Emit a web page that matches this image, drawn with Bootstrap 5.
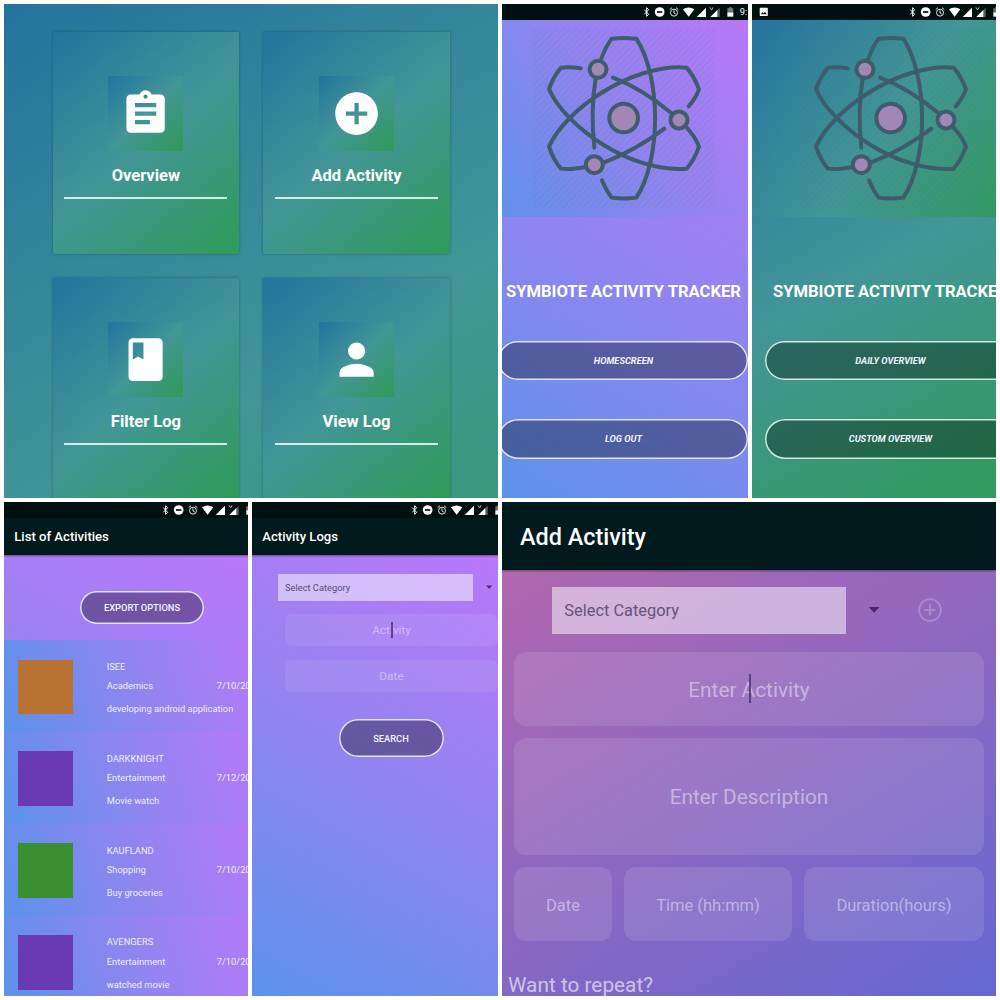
<!DOCTYPE html>
<html lang="en">
<head>
<meta charset="utf-8">
<meta name="viewport" content="width=device-width, initial-scale=1">
<title>Symbiote Activity Tracker</title>
<link href="https://cdn.jsdelivr.net/npm/bootstrap@5.3.0/dist/css/bootstrap.min.css" rel="stylesheet">
<style>
body{width:1000px;height:1000px;overflow:hidden;background:#fff;font-family:Roboto,"Liberation Sans",sans-serif;color:#fff;line-height:1}
.board{width:1000px;height:1000px;padding:4px;gap:4px}
.board-row{height:494px;gap:4px}
.screen{height:494px;overflow:hidden;flex:none}
.w-a{width:494px}.w-b{width:246px}.w-c{width:244px}
.phone{width:276px;flex:none}
.shift{margin-left:-17px}
.statusbar{height:16px;background:#000f0f;flex:none}
.statusbar svg{display:block;flex:none}
.st-shot{margin-left:6.8px;margin-right:139.7px}
.st-156{margin-left:156.7px}
.clock{font-size:9.3px;margin-left:-12px}
.dark-top{background:#001a1e;flex:none;font-weight:500;box-shadow:0 1px 2px rgba(0,0,0,.4);position:relative}
.dark-top.sm-top{height:37px;font-size:13.1px;padding-left:10.3px}
.dark-top.lg-top{height:67.5px;font-size:23.4px;padding:4px 0 0 18px}
/* home */
.home{background:linear-gradient(149.5deg,#24739e,#429697 50%,#2f9a57) 0 0/494px 790px no-repeat;padding:28.4px 0 0 48.6px}
.tiles{display:grid;grid-template-columns:186.6px 186.6px;grid-auto-rows:222px;gap:24px}
.tile{background:linear-gradient(139.9deg,#24739e,#429697 50%,#2f9a57);box-shadow:0 0 3px rgba(0,0,0,.3);padding:44px 11.6px 0;border-radius:1px}
.tile-ico{width:75px;height:75px;background:linear-gradient(135deg,#24739e,#429697 50%,#2f9a57)}
.tile-ico svg{width:51.2px;height:51.2px;fill:#fff}
.tile h2{font-size:16.5px;font-weight:700;margin:16px 0 12px;line-height:18px}
.rule{height:2px;background:#d3ecea;width:163px}
/* splash */
.purple{background:linear-gradient(209.4deg,#bb77fa,#9284f0 50%,#5b92ea)}
.green{background:linear-gradient(150.6deg,#24739e,#429697 50%,#2f9a57)}
.body-h{height:478px}
.hero{height:196.7px;padding:8px 0 0 1.4px}
.hero-p{background:linear-gradient(234.5deg,#bb77fa,#9284f0 50%,#5b92ea)}
.hero-g{background:linear-gradient(125.5deg,#24739e,#429697 50%,#2f9a57)}
.brand{font-size:16.6px;font-weight:700;margin:66px 0 41px;line-height:17px;white-space:nowrap;padding-left:1px}
.pill{box-shadow:inset 0 0 0 1.5px #e3e2fa;border-radius:30px;background:rgba(0,0,0,.33);color:#f3f2ff;font-weight:500;font-size:9.3px;display:flex;align-items:center;justify-content:center}
.pill-l{width:250px;height:39.4px;margin-bottom:39.4px;font-style:italic;font-weight:700;padding-left:1px}
.green .pill{box-shadow:inset 0 0 0 1.5px #cfe9df}
.pill-export{width:123.5px;height:33px;margin:36px auto 16px}
.pill-search{width:105px;height:38.4px;margin:26.7px auto 0}
/* list */
.entry{height:91.9px;background:linear-gradient(251.6deg,#bb77fa,#9284f0 50%,#5b92ea);font-size:9.3px;padding:19.6px 0 0 14.2px;color:#f0edff}
.swatch{width:54.6px;height:54.6px;flex:none;margin-right:34px}
.sw-o{background:#b87333}.sw-v{background:#6a3ab2}.sw-g{background:#3a8f30}
.e-text{line-height:12px;padding-top:1.2px}
.e-cat{margin:7.1px 0 11.2px}
.e-cat span:first-child{width:110px}
/* forms */
.log-form{padding-top:19px}
.pick{background:rgba(255,255,255,.5);color:#5c4a75}
.pick-s{width:195px;height:26.6px;margin-left:26px;font-size:9.3px;padding-left:7px}
.pick-l{width:294px;height:46.5px;margin-left:50.3px;font-size:16.4px;padding:2px 0 0 12px;color:#67527a}
.field{background:rgba(255,255,255,.11);color:rgba(255,255,255,.46);display:flex;align-items:center;justify-content:center;position:relative}
.field-s{width:213px;height:32.7px;border-radius:7px;margin-left:33px;padding-top:2px;font-size:11.8px;color:rgba(255,255,255,.42);background:rgba(255,255,255,.08)}
.field-l{border-radius:12px;font-size:20.8px;padding-top:3px}
.field-m{border-radius:12px;font-size:16.5px;height:74px;padding-top:4px}
.cursor{position:absolute;background:#523079;opacity:.85}
.add{background:linear-gradient(149deg,#b267b0,#6568d2);height:426.5px;padding-top:17.5px}
.fields{padding:18.3px 12px 0;gap:12px}
.repeat{font-size:20.8px;padding:33.500px 0 0 6px;color:rgba(255,255,255,.62);white-space:nowrap;line-height:22px}
</style>
<script src="https://cdn.jsdelivr.net/npm/bootstrap@5.3.0/dist/js/bootstrap.bundle.min.js"></script>
</head>
<body>
<svg width="0" height="0" class="position-absolute">
  <defs>
    <pattern id="hatch" width="14" height="14" patternUnits="userSpaceOnUse" patternTransform="rotate(45)"><rect width="6" height="14" fill="#3f5c6e" opacity=".075"/></pattern>
    <symbol id="status" viewBox="430 12 330 48">
      <path d="M437 29L450 43L444 49V23L450 29L437 43" fill="none" stroke="#fff" stroke-width="3"/>
      <circle cx="483" cy="36" r="14.5" fill="#fff"/><rect x="475" y="33.500" width="16" height="5" fill="#000f0f"/>
      <circle cx="526" cy="38" r="10.500" fill="none" stroke="#dfe5e5" stroke-width="3"/><path d="M526 31V39L531 42M513 29L520 23M539 29L532 23" fill="none" stroke="#dfe5e5" stroke-width="3"/>
      <path d="M553 28Q570 17 587 28L570 50Z" fill="#fff"/>
      <path d="M594 51H622V23Z" fill="#fff"/>
      <path d="M635 51L663 23V51Z" fill="#fff" opacity=".35"/><path d="M635 51L656 30V51Z" fill="#fff"/><path d="M634 22L639 30M643 22L639 30" stroke="#fff" stroke-width="3" opacity=".7"/>
      <path d="M686 25H691V22H699V25H704V37H686Z" fill="#6d7676"/><path d="M686 37H704V50H686Z" fill="#fff"/>
    </symbol>
    <symbol id="atom" viewBox="104 84 546 544">
      <rect x="104" y="84" width="546" height="544" fill="url(#hatch)"/>
      <g fill="none" stroke="#3f5c6c" stroke-width="12" stroke-linecap="round" stroke-linejoin="round">
        <path d="M309 176Q322 140 340 116Q376 112 414 116C489 230 489 480 414 593Q376 598 340 593Q324 572 311 541"/>
        <path d="M292 235Q276 330 288 443"/>
        <path d="M247 205Q215 200 188 203Q165 230 152 267C200 380 400 520 565 506Q588 480 602 440Q590 410 566 384"/>
        <path d="M344 233Q430 265 520 340"/>
        <path d="M498 386Q410 452 318 487M260 501Q215 510 188 506Q165 480 152 440C200 330 400 190 565 203Q588 230 602 268Q592 295 571 319"/>
        <g fill="#a186b6"><circle cx="299" cy="208" r="25.500"/><circle cx="542" cy="360" r="25.500"/><circle cx="288" cy="494" r="25.500"/><circle cx="376" cy="354" r="43"/></g>
      </g>
    </symbol>
  </defs>
</svg>
<main class="board d-flex flex-column">
  <div class="board-row d-flex">
    <section class="screen w-a home">
      <div class="tiles">
        <div class="tile d-flex flex-column align-items-center">
          <div class="tile-ico d-flex align-items-center justify-content-center"><svg viewBox="0 0 24 24"><path d="M19 3h-4.180C14.400 1.840 13.300 1 12 1c-1.300 0-2.400.84-2.820 2H5c-1.100 0-2 .9-2 2v14c0 1.100.9 2 2 2h14c1.100 0 2-.9 2-2V5c0-1.100-.9-2-2-2zm-7 0c.55 0 1 .45 1 1s-.45 1-1 1-1-.45-1-1 .45-1 1-1zm2 14H7v-2h7v2zm3-4H7v-2h10v2zm0-4H7V7h10v2z"/></svg></div>
          <h2>Overview</h2><div class="rule"></div>
        </div>
        <div class="tile d-flex flex-column align-items-center">
          <div class="tile-ico d-flex align-items-center justify-content-center"><svg viewBox="0 0 24 24"><path d="M12 2C6.480 2 2 6.480 2 12s4.480 10 10 10 10-4.480 10-10S17.520 2 12 2zm5 11h-4v4h-2v-4H7v-2h4V7h2v4h4v2z"/></svg></div>
          <h2>Add Activity</h2><div class="rule"></div>
        </div>
        <div class="tile d-flex flex-column align-items-center">
          <div class="tile-ico d-flex align-items-center justify-content-center"><svg viewBox="0 0 24 24"><path d="M18 2H6c-1.100 0-2 .9-2 2v16c0 1.100.9 2 2 2h12c1.100 0 2-.9 2-2V4c0-1.100-.9-2-2-2zM6 4h5v8l-2.500-1.500L6 12V4z"/></svg></div>
          <h2>Filter Log</h2><div class="rule"></div>
        </div>
        <div class="tile d-flex flex-column align-items-center">
          <div class="tile-ico d-flex align-items-center justify-content-center"><svg viewBox="0 0 24 24"><path d="M12 12c2.210 0 4-1.790 4-4s-1.790-4-4-4-4 1.790-4 4 1.790 4 4 4zm0 2c-2.670 0-8 1.340-8 4v2h16v-2c0-2.660-5.330-4-8-4z"/></svg></div>
          <h2>View Log</h2><div class="rule"></div>
        </div>
      </div>
    </section>

    <section class="screen w-b">
      <div class="phone shift">
        <div class="statusbar d-flex align-items-center"><svg class="st-156" width="110" height="16"><use href="#status"/></svg><span class="clock">9:</span></div>
        <div class="body-h purple d-flex flex-column align-items-center">
          <div class="hero hero-p w-100 d-flex justify-content-center"><svg width="182" height="181.300"><use href="#atom"/></svg></div>
          <h1 class="brand">SYMBIOTE ACTIVITY TRACKER</h1>
          <div class="pill pill-l">HOMESCREEN</div>
          <div class="pill pill-l">LOG OUT</div>
        </div>
      </div>
    </section>

    <section class="screen w-c">
      <div class="phone">
        <div class="statusbar d-flex align-items-center"><svg class="st-shot" width="10" height="10" viewBox="0 0 10 10"><path fill="#fff" fill-rule="evenodd" d="M1.500 .8h6.500a.8.8 0 0 1 .8.8v6.600a.8.8 0 0 1-.8.8H1.500a.8.8 0 0 1-.8-.8V1.600a.8.8 0 0 1 .8-.8zM1.800 7.200h6L6 4.700 4.500 6.500 3.300 5.300z"/></svg><svg width="110" height="16"><use href="#status"/></svg></div>
        <div class="body-h green d-flex flex-column align-items-center">
          <div class="hero hero-g w-100 d-flex justify-content-center"><svg width="182" height="181.300"><use href="#atom"/></svg></div>
          <h1 class="brand">SYMBIOTE ACTIVITY TRACKER</h1>
          <div class="pill pill-l">DAILY OVERVIEW</div>
          <div class="pill pill-l">CUSTOM OVERVIEW</div>
        </div>
      </div>
    </section>
  </div>

  <div class="board-row d-flex">
    <section class="screen w-c">
      <div class="phone">
        <div class="statusbar d-flex align-items-center"><svg class="st-156" width="110" height="16"><use href="#status"/></svg></div>
        <div class="dark-top sm-top d-flex align-items-center">List of Activities</div>
        <div class="purple overflow-hidden" style="height:441px">
          <div class="pill pill-export">EXPORT OPTIONS</div>
          <div class="entry d-flex"><div class="swatch sw-o"></div><div class="e-text text-nowrap"><div>ISEE</div><div class="e-cat d-flex"><span>Academics</span><span>7/10/2018</span></div><div>developing android application</div></div></div>
          <div class="entry d-flex"><div class="swatch sw-v"></div><div class="e-text text-nowrap"><div>DARKKNIGHT</div><div class="e-cat d-flex"><span>Entertainment</span><span>7/12/2018</span></div><div>Movie watch</div></div></div>
          <div class="entry d-flex"><div class="swatch sw-g"></div><div class="e-text text-nowrap"><div>KAUFLAND</div><div class="e-cat d-flex"><span>Shopping</span><span>7/10/2018</span></div><div>Buy groceries</div></div></div>
          <div class="entry d-flex"><div class="swatch sw-v"></div><div class="e-text text-nowrap"><div>AVENGERS</div><div class="e-cat d-flex"><span>Entertainment</span><span>7/10/2018</span></div><div>watched movie</div></div></div>
        </div>
      </div>
    </section>

    <section class="screen w-b">
      <div class="phone" style="width:278px">
        <div class="statusbar d-flex align-items-center"><svg class="st-156 ms-auto" width="110" height="16" style="margin-right:9.700px"><use href="#status"/></svg></div>
        <div class="dark-top sm-top d-flex align-items-center">Activity Logs</div>
        <div class="purple log-form" style="height:441px">
          <div class="d-flex align-items-center"><div class="pick pick-s d-flex align-items-center">Select Category</div><svg class="ms-2" width="16" height="8"><path d="M5 2.500h6.400L8.200 5.700z" fill="#4a2a70"/></svg></div>
          <div class="field field-s" style="margin-top:13.200px">Activity<span class="cursor" style="width:1.500px;height:16px;left:106.200px;top:8px"></span></div>
          <div class="field field-s" style="margin-top:13.200px">Date</div>
          <div class="pill pill-search">SEARCH</div>
        </div>
      </div>
    </section>

    <section class="screen w-a">
      <div class="dark-top lg-top d-flex align-items-center">Add Activity</div>
      <div class="add">
        <div class="d-flex align-items-center">
          <div class="pick pick-l d-flex align-items-center">Select Category</div>
          <svg style="margin-left:22px" width="12" height="6"><path d="M.6 0h11L6.100 5.800z" fill="#4a2a66"/></svg>
          <svg style="margin-left:37.500px" width="24" height="24" fill="none" stroke="#fff" stroke-opacity=".22" stroke-width="2"><path d="M12 1.200a10.800 10.800 0 1 0 .01 0zM12 6.500v11M6.500 12H11M13 12h4.500"/></svg>
        </div>
        <div class="fields d-flex flex-column">
          <div class="field field-l" style="height:74px">Enter Activity<span class="cursor" style="width:2.400px;height:29px;left:234.500px;top:22px"></span></div>
          <div class="field field-l" style="height:117px">Enter Description</div>
          <div class="d-flex" style="gap:12px">
            <div class="field field-m" style="width:98px">Date</div>
            <div class="field field-m" style="width:168px">Time (hh:mm)</div>
            <div class="field field-m flex-fill">Duration(hours)</div>
          </div>
        </div>
        <div class="repeat">Want to repeat?</div>
      </div>
    </section>
  </div>
</main>
</body>
</html>
